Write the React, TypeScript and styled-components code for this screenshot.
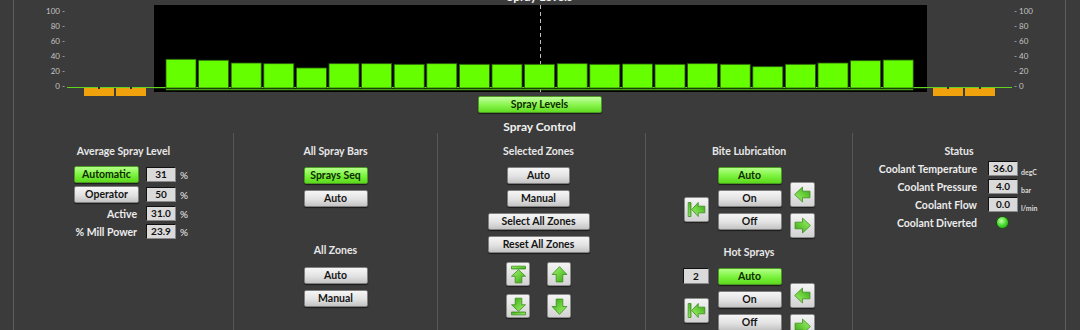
import React, { useId } from "react";
import styled, { createGlobalStyle, css } from "styled-components";

const GlobalStyle = createGlobalStyle`
  html, body {
    margin: 0;
    padding: 0;
    background: #3b3b3b;
  }
  body {
    font-family: Lato, "Open Sans", sans-serif;
  }
`;

const levels = [
  38.3, 37, 33.3, 32.4, 26.7, 32.4, 32.4, 31.6, 32.4, 31.6, 31.6, 31.6, 32.4,
  31.6, 32, 31.6, 32.4, 31.6, 28.4, 31.6, 33.3, 36.4, 37.3,
];
const leftTicks = ["100 -", "80 -", "60 -", "40 -", "20 -", "0 -"];
const rightTicks = ["- 100", "- 80", "- 60", "- 40", "- 20", "- 0"];

const Screen = styled.div`
  width: 1080px;
  height: 330px;
  overflow: hidden;
  background: #3b3b3b;
  font-family: Lato, "Open Sans", sans-serif;
  font-weight: 700;
  color: #ececec;
`;

const Frame = styled.div`
  margin-left: 13px;
  width: 1053px;
  height: 100%;
  box-sizing: border-box;
  border-left: 1px solid #5e5e5e;
  border-right: 1px solid #5e5e5e;
  display: flex;
  flex-direction: column;
`;

const ChartTitle = styled.div`
  margin-top: -10px;
  height: 15px;
  line-height: 14px;
  font-size: 12px;
  text-align: center;
  color: #f2f2f2;
  flex-shrink: 0;
`;

const ChartRow = styled.div`
  display: flex;
  height: 91px;
  flex-shrink: 0;
  align-items: flex-start;
`;

const Axis = styled.div<{ $side: "left" | "right" }>`
  width: 53px;
  height: 86px;
  padding-top: 1px;
  box-sizing: border-box;
  display: flex;
  flex-direction: column;
  justify-content: space-between;
  align-items: ${(p) => (p.$side === "left" ? "flex-end" : "flex-start")};
  padding-right: ${(p) => (p.$side === "left" ? "2px" : "0")};
  padding-left: ${(p) => (p.$side === "right" ? "2px" : "0")};
  font-size: 8px;
  line-height: 10px;
  font-weight: 400;
  color: #c4c4c4;
`;

const Strip = styled.div<{ $width: number }>`
  width: ${(p) => p.$width}px;
  height: 91px;
  padding-top: 82px;
  box-sizing: border-box;
  display: flex;
  flex-direction: column;
`;

const ZeroLine = styled.div`
  height: 1px;
  background: #5fd41e;
`;

const OrangeRow = styled.div<{ $offset: number }>`
  display: flex;
  gap: 2px;
  padding-left: ${(p) => p.$offset}px;
`;

const OrangeBar = styled.div`
  position: relative;
  width: 30px;
  height: 8px;
  background: #f0a20c;
  &::after {
    content: "";
    position: absolute;
    left: 14px;
    top: -1px;
    width: 2px;
    height: 2px;
    background: #3a2a00;
  }
`;

const Plot = styled.div`
  width: 773px;
  height: 87px;
  background: #000;
  svg {
    display: block;
  }
`;

const buttonLook = {
  green: css`
    background: linear-gradient(#b4ff88, #78f23a 55%, #5cd81e);
    border: 1px solid #4b9a22;
    color: #0f2a02;
  `,
  gray: css`
    background: linear-gradient(#f6f6f6, #e2e2e2 55%, #c4c4c4);
    border: 1px solid #808080;
    color: #151515;
  `,
};

const Button = styled.button<{ $variant?: "green" | "gray"; $w?: number }>`
  width: ${(p) => p.$w ?? 64}px;
  height: 17px;
  padding: 0;
  box-sizing: border-box;
  border-radius: 2px;
  font-family: inherit;
  font-weight: 700;
  font-size: 10.5px;
  line-height: 15px;
  box-shadow: 0 1px 1px rgba(0, 0, 0, 0.55);
  ${(p) => buttonLook[p.$variant ?? "gray"]}
`;

const SprayLevelsButton = styled(Button)`
  align-self: center;
  flex-shrink: 0;
  background: linear-gradient(#c2ffa0, #86f44a 55%, #62dc22);
`;

const SectionTitle = styled.div`
  margin-top: 8px;
  height: 12px;
  line-height: 12px;
  font-size: 12px;
  text-align: center;
  color: #f2f2f2;
  flex-shrink: 0;
`;

const Columns = styled.div`
  display: grid;
  grid-template-columns: 219px 204px 208px 207px 213px;
  flex: 1;
`;

const Column = styled.div<{ $shift?: number }>`
  display: flex;
  flex-direction: column;
  align-items: center;
  padding-top: 12px;
  padding-right: ${(p) => p.$shift ?? 0}px;
  & + & {
    border-left: 1px solid #575757;
  }
`;

const GroupTitle = styled.div<{ $gap?: number }>`
  margin-top: ${(p) => p.$gap ?? 0}px;
  height: 12px;
  line-height: 12px;
  font-size: 10.5px;
  color: #e8e8e8;
`;

const Stack = styled.div<{ $gap?: number }>`
  display: flex;
  flex-direction: column;
  align-items: center;
  gap: 6px;
  margin-top: ${(p) => p.$gap ?? 10}px;
`;

const LevelGrid = styled.div`
  align-self: flex-start;
  display: grid;
  grid-template-columns: 125px 37px auto;
  grid-template-rows: 17px 17px 15px 15px;
  row-gap: 3px;
  align-items: center;
  margin-top: 9px;
`;

const StatusGrid = styled.div`
  align-self: flex-start;
  display: grid;
  grid-template-columns: 126px 39px auto;
  grid-auto-rows: 15px;
  row-gap: 3px;
  align-items: center;
  margin-top: 4px;
`;

const Label = styled.span`
  justify-self: end;
  font-size: 10.5px;
  padding-right: 2px;
  white-space: nowrap;
`;

const ButtonCell = styled.div`
  justify-self: end;
  display: flex;
`;

const ValueBox = styled.div<{ $w?: number; $h?: number }>`
  justify-self: end;
  width: ${(p) => p.$w ?? 30}px;
  height: ${(p) => p.$h ?? 15}px;
  box-sizing: border-box;
  background: #dadada;
  border: 1px solid;
  border-color: #111 #8a8a8a #8a8a8a #111;
  color: #111;
  font-size: 10px;
  line-height: ${(p) => (p.$h ?? 15) - 2}px;
  text-align: center;
`;

const Percent = styled.span`
  padding-left: 4px;
  font-size: 10px;
  font-weight: 400;
`;

const Unit = styled.span`
  align-self: end;
  padding-left: 3px;
  font-size: 7px;
  line-height: 8px;
  color: #dcdcdc;
  font-weight: 700;
`;

const Led = styled.div`
  justify-self: end;
  margin-right: 9px;
  width: 11px;
  height: 11px;
  border-radius: 50%;
  border: 1px solid #1d5212;
  background: radial-gradient(circle at 40% 35%, #c4ffa6, #45d92e 50%, #1e8c14);
`;

const IconGrid = styled.div`
  display: grid;
  grid-template-columns: 24px 24px;
  column-gap: 17px;
  row-gap: 8px;
  margin-top: 9px;
`;

const IconButton = styled.button<{ $size?: number }>`
  width: ${(p) => p.$size ?? 24}px;
  height: ${(p) => p.$size ?? 24}px;
  padding: 0;
  box-sizing: border-box;
  border: 1px solid #8c8c8c;
  border-radius: 2px;
  background: linear-gradient(#f4f4f4, #d2d2d2);
  box-shadow: 0 1px 1px rgba(0, 0, 0, 0.5);
  display: flex;
  align-items: center;
  justify-content: center;
`;

const Group = styled.div`
  display: flex;
  align-items: flex-start;
  margin-top: 10px;
`;

const SideColumn = styled.div<{ $top: number }>`
  display: flex;
  flex-direction: column;
  align-items: center;
  gap: 6px;
  margin-top: ${(p) => p.$top}px;
`;

const LeftColumn = styled.div`
  width: 25px;
  margin-right: 9px;
  display: flex;
  flex-direction: column;
  align-items: center;
`;

const RightColumn = styled(SideColumn)`
  margin-left: 8px;
`;

type ArrowKind = "up" | "upFirst" | "down" | "downLast" | "left" | "right" | "leftFirst";

const ArrowIcon = ({ kind, size = 21 }: { kind: ArrowKind; size?: number }) => {
  const id = useId().replace(/:/g, "");
  const withBar = kind === "upFirst" || kind === "downLast" || kind === "leftFirst";
  const angle = {
    up: 0,
    upFirst: 0,
    down: 180,
    downLast: 180,
    left: -90,
    leftFirst: -90,
    right: 90,
  }[kind];
  return (
    <svg width={size} height={size} viewBox="0 0 24 24">
      <defs>
        <linearGradient id={id} x1="0" y1="0" x2="1" y2="1">
          <stop offset="0" stopColor="#a8f07c" />
          <stop offset="0.5" stopColor="#6cd23c" />
          <stop offset="1" stopColor="#3a9e1a" />
        </linearGradient>
      </defs>
      <g
        transform={`rotate(${angle} 12 12)`}
        fill={`url(#${id})`}
        stroke="#3a8c1c"
        strokeWidth="0.9"
        strokeLinejoin="round"
      >
        {withBar ? (
          <>
            <rect x="4" y="2.5" width="16" height="3.2" />
            <path d="M12 6.5 L20 14 L15.8 14 L15.8 21.5 L8.2 21.5 L8.2 14 L4 14 Z" />
          </>
        ) : (
          <path d="M12 3 L20.5 12 L15.8 12 L15.8 20.5 L8.2 20.5 L8.2 12 L3.5 12 Z" />
        )}
      </g>
    </svg>
  );
};

const SprayChart = () => {
  const pitch = 32.6;
  const lastEnd = 12 + (levels.length - 1) * pitch + 30;
  return (
    <Plot>
      <svg width={773} height={87}>
        <line x1={386.5} y1={0} x2={386.5} y2={87} stroke="#bdbdbd" strokeDasharray="4 3" />
        <rect x={0} y={82} width={773} height={1.2} fill="#5fd41e" />
        {levels.map((v, i) => (
          <rect
            key={i}
            x={12 + i * pitch}
            y={83 - v * 0.75}
            width={30}
            height={v * 0.75}
            fill="#66ff00"
            stroke="#2c5e0e"
            strokeWidth={0.8}
          />
        ))}
        <rect x={12} y={84.2} width={lastEnd - 12} height={1} fill="#55c81a" />
      </svg>
    </Plot>
  );
};

type Lube = { title: string; gap?: number; value?: string };

const ModeGroup = ({ value }: { value?: string }) => (
  <Group>
    <LeftColumn>
      {value && (
        <ValueBox $w={26} $h={16}>
          {value}
        </ValueBox>
      )}
      <div style={{ marginTop: value ? 14 : 30 }}>
        <IconButton $size={25}>
          <ArrowIcon kind="leftFirst" />
        </IconButton>
      </div>
    </LeftColumn>
    <Stack $gap={0}>
      <Button $variant="green">Auto</Button>
      <Button>On</Button>
      <Button>Off</Button>
    </Stack>
    <RightColumn $top={15}>
      <IconButton $size={25}>
        <ArrowIcon kind="left" />
      </IconButton>
      <IconButton $size={25}>
        <ArrowIcon kind="right" />
      </IconButton>
    </RightColumn>
  </Group>
);

const lubeGroups: Lube[] = [
  { title: "Bite Lubrication" },
  { title: "Hot Sprays", gap: 8, value: "2" },
];

export default function App() {
  return (
    <Screen>
      <GlobalStyle />
      <Frame>
        <ChartTitle>Spray Levels</ChartTitle>
        <ChartRow>
          <Axis $side="left">
            {leftTicks.map((t) => (
              <span key={t}>{t}</span>
            ))}
          </Axis>
          <Strip $width={87}>
            <ZeroLine />
            <OrangeRow $offset={17}>
              <OrangeBar />
              <OrangeBar />
            </OrangeRow>
          </Strip>
          <SprayChart />
          <Strip $width={85}>
            <ZeroLine />
            <OrangeRow $offset={6}>
              <OrangeBar />
              <OrangeBar />
            </OrangeRow>
          </Strip>
          <Axis $side="right">
            {rightTicks.map((t) => (
              <span key={t}>{t}</span>
            ))}
          </Axis>
        </ChartRow>
        <SprayLevelsButton $variant="green" $w={124}>
          Spray Levels
        </SprayLevelsButton>
        <SectionTitle>Spray Control</SectionTitle>
        <Columns>
          <Column>
            <GroupTitle>Average Spray Level</GroupTitle>
            <LevelGrid>
              <ButtonCell>
                <Button $variant="green" $w={65}>
                  Automatic
                </Button>
              </ButtonCell>
              <ValueBox>31</ValueBox>
              <Percent>%</Percent>
              <ButtonCell>
                <Button $w={65}>Operator</Button>
              </ButtonCell>
              <ValueBox>50</ValueBox>
              <Percent>%</Percent>
              <Label>Active</Label>
              <ValueBox>31.0</ValueBox>
              <Percent>%</Percent>
              <Label>% Mill Power</Label>
              <ValueBox>23.9</ValueBox>
              <Percent>%</Percent>
            </LevelGrid>
          </Column>

          <Column>
            <GroupTitle>All Spray Bars</GroupTitle>
            <Stack>
              <Button $variant="green">Sprays Seq</Button>
              <Button>Auto</Button>
            </Stack>
            <GroupTitle $gap={37}>All Zones</GroupTitle>
            <Stack $gap={11}>
              <Button>Auto</Button>
              <Button>Manual</Button>
            </Stack>
          </Column>

          <Column $shift={6}>
            <GroupTitle>Selected Zones</GroupTitle>
            <Stack>
              <Button $w={63}>Auto</Button>
              <Button $w={63}>Manual</Button>
              <Button $w={102}>Select All Zones</Button>
              <Button $w={102}>Reset All Zones</Button>
            </Stack>
            <IconGrid>
              <IconButton>
                <ArrowIcon kind="upFirst" />
              </IconButton>
              <IconButton>
                <ArrowIcon kind="up" />
              </IconButton>
              <IconButton>
                <ArrowIcon kind="downLast" />
              </IconButton>
              <IconButton>
                <ArrowIcon kind="down" />
              </IconButton>
            </IconGrid>
          </Column>

          <Column>
            {lubeGroups.map((g) => (
              <React.Fragment key={g.title}>
                <GroupTitle $gap={g.gap}>{g.title}</GroupTitle>
                <ModeGroup value={g.value} />
              </React.Fragment>
            ))}
          </Column>

          <Column>
            <GroupTitle>Status</GroupTitle>
            <StatusGrid>
              <Label>Coolant Temperature</Label>
              <ValueBox>36.0</ValueBox>
              <Unit>degC</Unit>
              <Label>Coolant Pressure</Label>
              <ValueBox>4.0</ValueBox>
              <Unit>bar</Unit>
              <Label>Coolant Flow</Label>
              <ValueBox>0.0</ValueBox>
              <Unit>l/min</Unit>
              <Label>Coolant Diverted</Label>
              <Led />
              <span />
            </StatusGrid>
          </Column>
        </Columns>
      </Frame>
    </Screen>
  );
}
